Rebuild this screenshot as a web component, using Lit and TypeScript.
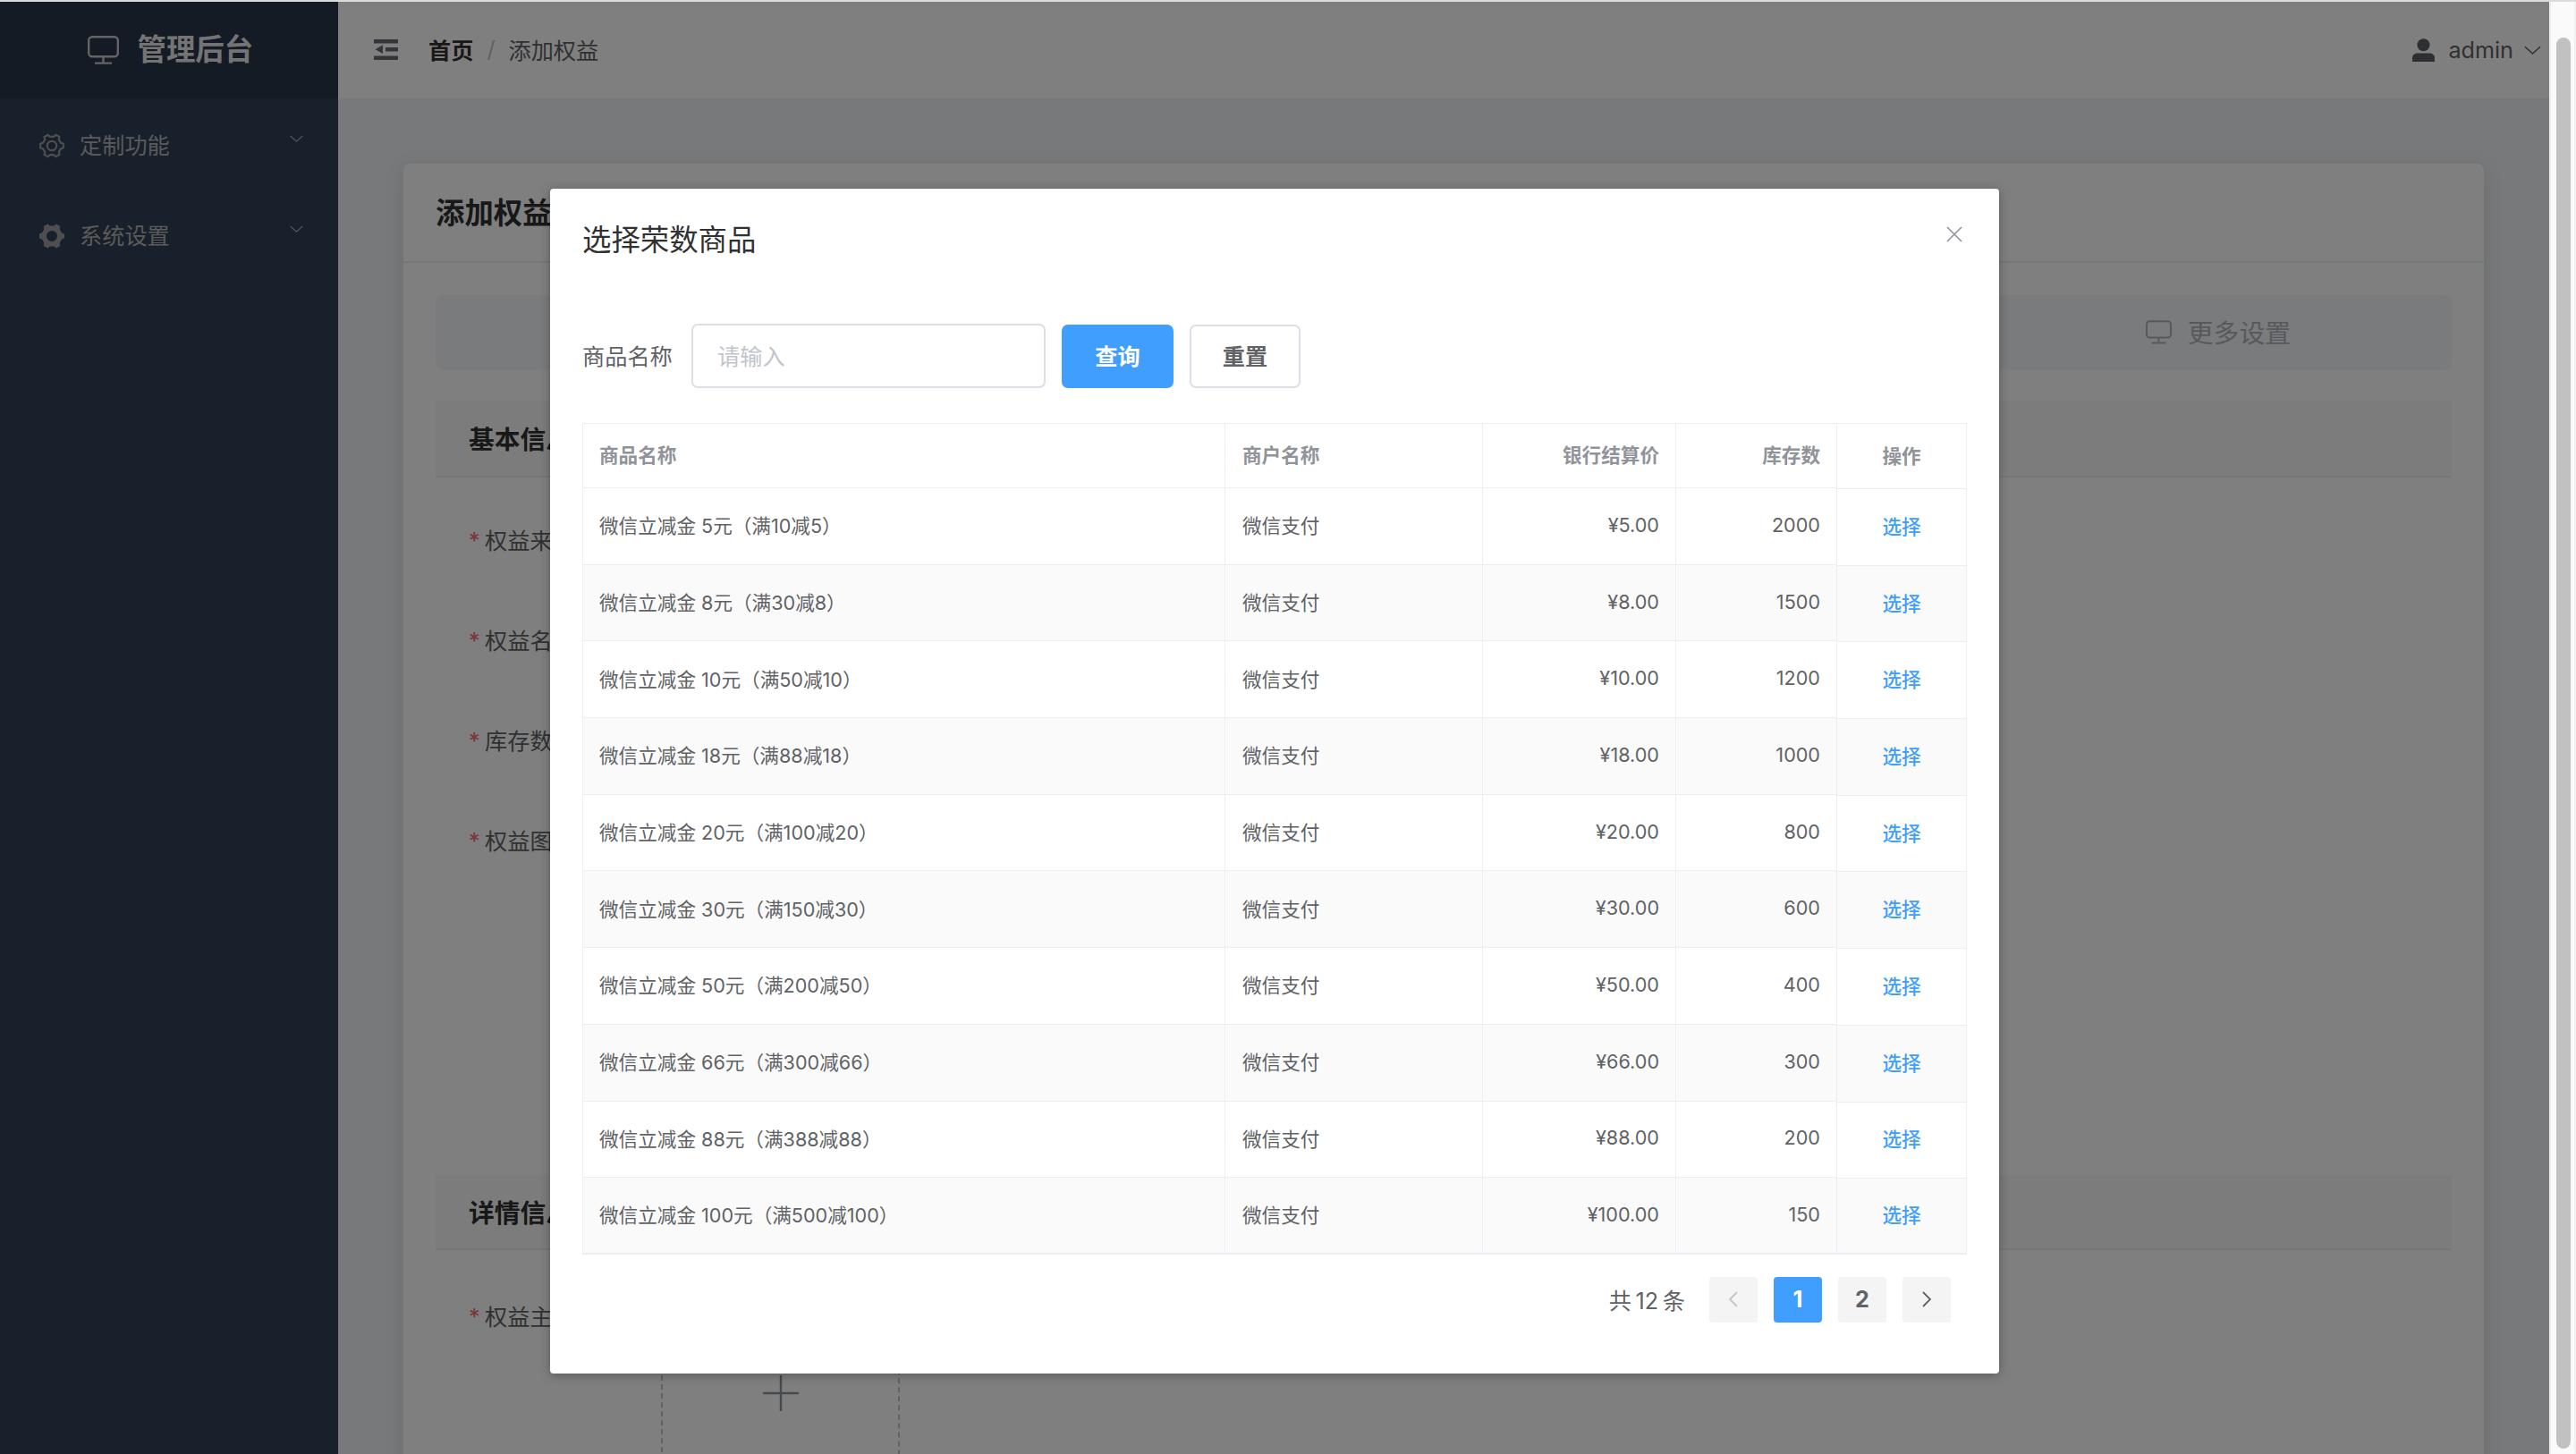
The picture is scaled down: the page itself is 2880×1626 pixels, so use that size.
import { LitElement, html, css, svg } from "lit";
import { customElement } from "lit/decorators.js";

const gearPath = (cx: number, cy: number, outer: number, root: number) => {
  const pts: string[] = [];
  for (let i = 0; i < 6; i++) {
    const a = i * 60;
    const list: [number, number][] = [[a - 19, root], [a - 10, outer], [a + 10, outer], [a + 19, root]];
    for (const [d, r] of list) {
      const t = (d * Math.PI) / 180;
      pts.push(`${(cx + r * Math.cos(t)).toFixed(2)} ${(cy + r * Math.sin(t)).toFixed(2)}`);
    }
  }
  return "M" + pts.join("L") + "Z";
};

const circlePath = (cx: number, cy: number, r: number) =>
  `M${cx - r} ${cy}a${r} ${r} 0 1 0 ${2 * r} 0a${r} ${r} 0 1 0 ${-2 * r} 0Z`;

const monitor = (cls: string) => html`<svg class=${cls} viewBox="0 0 35 32" fill="none" stroke="currentColor" stroke-width="2.4">
  <rect x="1.2" y="1.2" width="32.6" height="22" rx="4"></rect>
  <path d="M17.5 23.5V30.6M8 30.6H27"></path>
</svg>`;

const chevron = (cls: string) => html`<svg class=${cls} viewBox="0 0 20 10" fill="none" stroke="currentColor" stroke-width="1.6">
  <path d="M1 1L10 9.2L19 1"></path>
</svg>`;

const rows = [
  ["微信立减金 5元（满10减5）", "¥5.00", "2000"],
  ["微信立减金 8元（满30减8）", "¥8.00", "1500"],
  ["微信立减金 10元（满50减10）", "¥10.00", "1200"],
  ["微信立减金 18元（满88减18）", "¥18.00", "1000"],
  ["微信立减金 20元（满100减20）", "¥20.00", "800"],
  ["微信立减金 30元（满150减30）", "¥30.00", "600"],
  ["微信立减金 50元（满200减50）", "¥50.00", "400"],
  ["微信立减金 66元（满300减66）", "¥66.00", "300"],
  ["微信立减金 88元（满388减88）", "¥88.00", "200"],
  ["微信立减金 100元（满500减100）", "¥100.00", "150"],
];

@customElement("app-root")
export class AppRoot extends LitElement {
  static styles = css`
    :host {
      display: block;
      width: 2880px;
      height: 1626px;
      overflow: hidden;
      font-family: Inter, "Noto Sans CJK SC", sans-serif;
      color: #606266;
    }
    * { box-sizing: border-box; }
    .strip { height: 2px; background: #dcdcdc; }
    .frame { display: flex; height: 1624px; }
    .viewport { position: relative; flex: 1; display: flex; overflow: hidden; }
    .scrollbar {
      width: 30px;
      padding: 40px 4px 6px 6px;
      background: #fafafa;
      border-left: 2px solid #eeeeee;
      border-right: 2px solid #f1f1f1;
    }
    .thumb { width: 16px; height: 100%; border-radius: 8px; background: #c1c1c1; }

    .aside { width: 378px; flex: none; background: #304156; }
    .logo {
      height: 108px;
      background: #28364a;
      display: flex;
      align-items: center;
      justify-content: center;
      gap: 21px;
      color: #ffffff;
      padding-left: 3px;
    }
    .logo-icon { width: 35px; height: 32px; color: #c8c8c8; }
    .logo-text { font-size: 32.4px; font-weight: 700; color: #e8e8e8; line-height: 40px; width: 130px; }
    .menu { padding-top: 2px; }
    .menu-item {
      height: 101px;
      padding: 0 39px 0 44px;
      display: flex;
      align-items: center;
      color: #b4b4b4;
      font-size: 25.2px;
    }
    .gear { width: 28px; height: 30px; margin-right: 17px; color: #9c9c9c; }
    .menu-label { flex: 1; padding-bottom: 3px; }
    .menu-chev { width: 15px; height: 8px; margin-bottom: 16px; color: #a8adb4; }

    .main { flex: 1; display: flex; flex-direction: column; background: #f0f2f5; min-width: 0; }
    .topbar {
      height: 108px;
      flex: none;
      background: #ffffff;
      display: flex;
      align-items: center;
      padding: 0 9px 0 40px;
      font-size: 25.2px;
    }
    .burger { width: 27px; height: 24px; color: #666a70; margin-right: 34px; }
    .crumb-home { font-weight: 700; color: #303133; padding-bottom: 2px; }
    .crumb-sep { color: #c0c4cc; margin: 0 15px; padding-bottom: 2px; }
    .crumb-cur { color: #606266; padding-bottom: 2px; }
    .spacer { flex: 1; }
    .user { width: 25px; height: 26px; color: #5a5e66; margin-right: 15px; }
    .user-name { color: #606266; margin-right: 12px; }
    .user-chev { width: 19px; height: 10px; color: #606266; }

    .content { flex: 1; padding: 73px 73px 0; overflow: hidden; }
    .card {
      height: 1600px;
      background: #ffffff;
      border-radius: 7px;
      box-shadow: 0 4px 22px rgba(0, 0, 0, 0.1);
    }
    .card-head {
      height: 111px;
      padding: 0 36px 4px 36px;
      border-bottom: 2px solid #ebeef5;
      display: flex;
      align-items: center;
      font-size: 32.4px;
      font-weight: 700;
      color: #303133;
    }
    .card-body { padding: 36px 36px 0; }
    .more {
      height: 83px;
      background: #f5f6f8;
      border-radius: 7px;
      display: flex;
      align-items: center;
      justify-content: flex-end;
      padding: 0 180px 0 0;
      font-size: 28.8px;
      color: #b0b3b8;
      gap: 18px;
    }
    .more span { padding-bottom: 2px; }
    .more-icon { width: 29px; height: 27px; }
    .section {
      height: 86px;
      margin-top: 35px;
      background: #f9f9f9;
      border-bottom: 2px solid #ebeef5;
      display: flex;
      align-items: center;
      padding: 0 0 2px 37px;
      font-size: 28.8px;
      font-weight: 700;
      color: #303133;
    }
    .section.second { height: 84px; margin-top: 0; }
    .form-row {
      height: 112px;
      padding-left: 37px;
      display: flex;
      align-items: flex-start;
      font-size: 25.2px;
      color: #606266;
      line-height: 44px;
    }
    .form-row.first { margin-top: 49px; }
    .form-row.tall { height: 395px; }
    .form-row.upload-row { margin-top: 53px; height: 300px; }
    .star { color: #f56c6c; width: 18px; }
    .label { width: 197px; }
    .upload {
      width: 267px;
      height: 265px;
      border: 2px dashed #c0c4cc;
      border-radius: 7px;
      display: flex;
      align-items: center;
      justify-content: center;
      margin-top: -26px;
    }
    .plus { width: 40px; height: 40px; color: #8c939d; }

    .overlay {
      position: absolute;
      inset: 0;
      background: rgba(0, 0, 0, 0.5);
      padding: 209px 0 0 615px;
    }
    .dialog {
      position: relative;
      width: 1620px;
      height: 1325px;
      background: #ffffff;
      border-radius: 4px;
      box-shadow: 0 2px 12px rgba(0, 0, 0, 0.3);
      padding: 35px 36px 0 36px;
    }
    .dialog-title { font-size: 32.4px; line-height: 45px; color: #303133; }
    .close { position: absolute; left: 1561px; top: 42px; width: 18px; height: 18px; color: #909399; }
    .search { display: flex; align-items: center; margin-top: 71px; height: 72px; }
    .search-label { font-size: 25.2px; color: #606266; width: 122px; flex: none; padding-bottom: 3px; }
    .input {
      width: 396px;
      height: 72px;
      border: 2px solid #dcdfe6;
      border-radius: 7px;
      padding: 0 0 3px 27px;
      display: flex;
      align-items: center;
      font-size: 25.2px;
      color: #c0c4cc;
      margin-right: 18px;
    }
    .btn {
      height: 71px;
      width: 125px;
      border-radius: 7px;
      display: flex;
      align-items: center;
      justify-content: center;
      font-size: 25.2px;
      font-weight: 700;
      margin-top: 1px;
      padding-bottom: 3px;
    }
    .btn.primary { background: #409eff; color: #ffffff; margin-right: 18px; }
    .btn.plain { border: 2px solid #dcdfe6; color: #606266; width: 124px; }

    .table {
      display: flex;
      margin-top: 39px;
      width: 1548px;
      border: solid #ebeef5;
      border-width: 1px 1px 0 1px;
      font-size: 21.6px;
    }
    .cols { width: 1402px; flex: none; }
    .tr {
      display: grid;
      grid-template-columns: 718px 288px 216px 180px;
      height: 85.7px;
      border-bottom: 1px solid #ebeef5;
    }
    .tr.head { height: 72px; }
    .tr.odd { background: #fafafa; }
    .tr.last { border-bottom-width: 2px; }
    .td {
      display: flex;
      align-items: center;
      border-right: 1px solid #ebeef5;
      padding: 0 18px 3px 19px;
      color: #606266;
      min-width: 0;
    }
    .td.name { padding-left: 18px; }
    .tr.head .td { color: #909399; font-weight: 700; padding-bottom: 4px; }
    .oc.head { color: #909399; font-weight: 700; padding-bottom: 4px; }
    .td.r { justify-content: flex-end; }
    .ops { flex: 1; min-width: 0; }
    .oc {
      display: flex;
      align-items: center;
      justify-content: center;
      height: 85.7px;
      border-bottom: 1px solid #ebeef5;
      color: #409eff;
      font-weight: 500;
      padding-bottom: 4px;
    }
    .oc.head { height: 73px; }
    .oc.odd { background: #fafafa; }
    .oc.last { height: 84.7px; border-bottom-width: 2px; }

    .pager {
      display: flex;
      justify-content: flex-end;
      align-items: center;
      gap: 18px;
      margin-top: 25px;
      padding-right: 18px;
      font-size: 25.2px;
    }
    .total { margin-right: 9px; color: #606266; word-spacing: -2.5px; }
    .pg {
      width: 54px;
      height: 51px;
      border-radius: 4px;
      background: #f4f4f5;
      display: flex;
      align-items: center;
      justify-content: center;
      font-weight: 700;
      color: #606266;
    }
    .pg.on { background: #409eff; color: #ffffff; }
    .pg.off { color: #c0c4cc; }
    .arrow { width: 10px; height: 18px; }
  `;

  render() {
    return html`
      <div class="strip"></div>
      <div class="frame">
        <div class="viewport">
          <aside class="aside">
            <div class="logo">${monitor("logo-icon")}<span class="logo-text">管理后台</span></div>
            <div class="menu">
              <div class="menu-item">
                <svg class="gear" viewBox="0 0 28 30" fill="none" stroke="currentColor" stroke-width="2.2">
                  ${svg`<path d=${gearPath(14, 15, 13, 10.4)}></path><path d=${circlePath(14, 15, 5.2)}></path>`}
                </svg>
                <span class="menu-label">定制功能</span>${chevron("menu-chev")}
              </div>
              <div class="menu-item">
                <svg class="gear" viewBox="0 0 28 30" fill="currentColor" fill-rule="evenodd">
                  ${svg`<path d=${gearPath(14, 15, 14.4, 11.6) + circlePath(14, 15, 6)}></path>`}
                </svg>
                <span class="menu-label">系统设置</span>${chevron("menu-chev")}
              </div>
            </div>
          </aside>
          <div class="main">
            <header class="topbar">
              <svg class="burger" viewBox="0 0 27 24" fill="currentColor">
                <path d="M0 0H27V4.5H0ZM13 9H27V13.5H13ZM0 18.5H27V23H0ZM10 6.2V16L1.5 11.2Z"></path>
              </svg>
              <span class="crumb-home">首页</span><span class="crumb-sep">/</span><span class="crumb-cur">添加权益</span>
              <span class="spacer"></span>
              <svg class="user" viewBox="0 0 25 26" fill="currentColor">
                <circle cx="12.5" cy="7.2" r="7"></circle>
                <path d="M0 26V21.5C0 18 3 16.4 6 16.4H19C22 16.4 25 18 25 21.5V26Z"></path>
              </svg>
              <span class="user-name">admin</span>${chevron("user-chev")}
            </header>
            <div class="content">
              <div class="card">
                <div class="card-head">添加权益</div>
                <div class="card-body">
                  <div class="more">${monitor("more-icon")}<span>更多设置</span></div>
                  <div class="section">基本信息</div>
                  <div class="form-row first"><span class="star">*</span><span class="label">权益来源</span></div>
                  <div class="form-row"><span class="star">*</span><span class="label">权益名称</span></div>
                  <div class="form-row"><span class="star">*</span><span class="label">库存数量</span></div>
                  <div class="form-row tall"><span class="star">*</span><span class="label">权益图片</span></div>
                  <div class="section second">详情信息</div>
                  <div class="form-row upload-row">
                    <span class="star">*</span><span class="label">权益主图</span>
                    <div class="upload">
                      <svg class="plus" viewBox="0 0 40 40" fill="none" stroke="currentColor" stroke-width="2.4">
                        <path d="M0 20H40M20 0V40"></path>
                      </svg>
                    </div>
                  </div>
                </div>
              </div>
            </div>
          </div>
          <div class="overlay">
            <div class="dialog">
              <div class="dialog-title">选择荣数商品</div>
              <svg class="close" viewBox="0 0 18 18" fill="none" stroke="currentColor" stroke-width="1.6">
                <path d="M1 1L17 17M17 1L1 17"></path>
              </svg>
              <div class="search">
                <span class="search-label">商品名称</span>
                <div class="input">请输入</div>
                <div class="btn primary">查询</div>
                <div class="btn plain">重置</div>
              </div>
              <div class="table">
                <div class="cols">
                  <div class="tr head">
                    <div class="td name">商品名称</div>
                    <div class="td">商户名称</div>
                    <div class="td r">银行结算价</div>
                    <div class="td r">库存数</div>
                  </div>
                  ${rows.map(
                    (r, i) => html`<div class="tr ${i % 2 ? "odd" : ""} ${i === rows.length - 1 ? "last" : ""}">
                      <div class="td name">${r[0]}</div>
                      <div class="td">微信支付</div>
                      <div class="td r">${r[1]}</div>
                      <div class="td r">${r[2]}</div>
                    </div>`
                  )}
                </div>
                <div class="ops">
                  <div class="oc head">操作</div>
                  ${rows.map(
                    (_, i) => html`<div class="oc ${i % 2 ? "odd" : ""} ${i === rows.length - 1 ? "last" : ""}">选择</div>`
                  )}
                </div>
              </div>
              <div class="pager">
                <span class="total">共 12 条</span>
                <div class="pg off">
                  <svg class="arrow" viewBox="0 0 10 18" fill="none" stroke="currentColor" stroke-width="1.8"><path d="M9 1L1 9L9 17"></path></svg>
                </div>
                <div class="pg on">1</div>
                <div class="pg">2</div>
                <div class="pg">
                  <svg class="arrow" viewBox="0 0 10 18" fill="none" stroke="currentColor" stroke-width="1.8"><path d="M1 1L9 9L1 17"></path></svg>
                </div>
              </div>
            </div>
          </div>
        </div>
        <div class="scrollbar"><div class="thumb"></div></div>
      </div>
    `;
  }
}
